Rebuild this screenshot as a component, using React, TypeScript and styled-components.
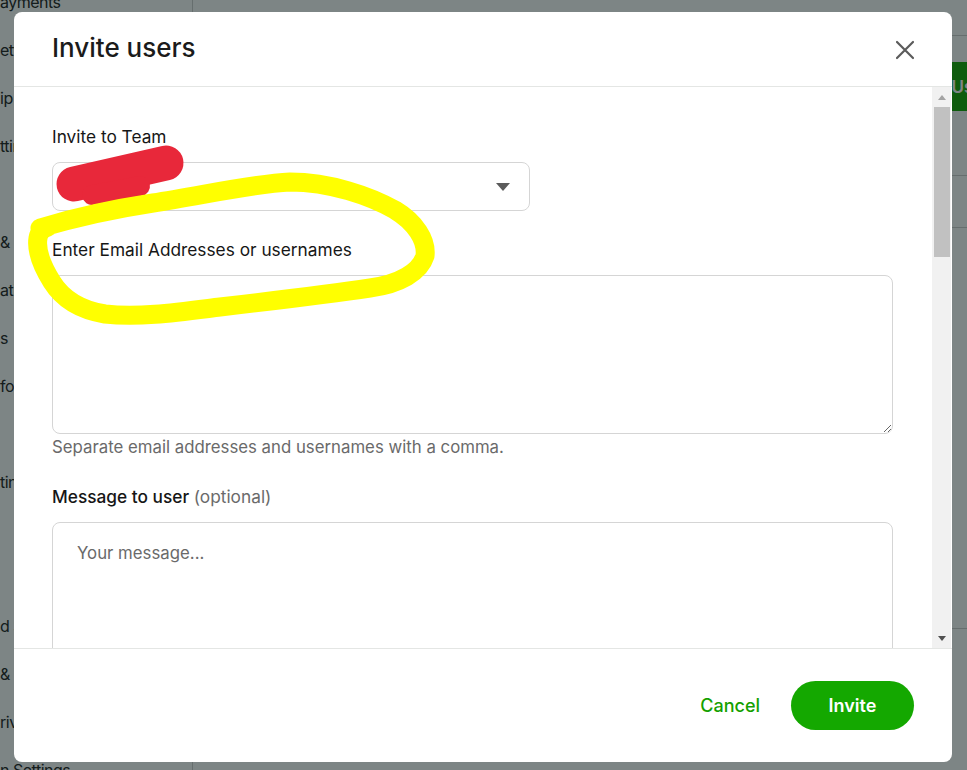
import React from "react";
import styled, { createGlobalStyle } from "styled-components";

const GlobalStyle = createGlobalStyle`
  html, body {
    margin: 0;
    padding: 0;
    height: 100%;
    overflow: hidden;
  }
  body {
    font-family: Inter, "Liberation Sans", sans-serif;
    color: #001e00;
  }
  #root {
    height: 100%;
  }
  * {
    box-sizing: border-box;
  }
`;

const Page = styled.div`
  position: relative;
  display: flex;
  height: 100vh;
  background: #fff;
  color: #222;
  overflow: hidden;
`;

const Sidebar = styled.nav`
  width: 193px;
  flex-shrink: 0;
  margin-top: -22px;
  border-right: 1px solid #cfcfcf;
  display: flex;
  flex-direction: column;
`;

const SideItem = styled.div`
  height: 48px;
  flex-shrink: 0;
  display: flex;
  align-items: center;
  font-size: 16px;
  letter-spacing: -0.5px;
  white-space: nowrap;
  overflow: hidden;
`;

const Main = styled.main`
  flex: 1;
  display: flex;
  flex-direction: column;
  min-width: 0;
`;

const TopBar = styled.div`
  height: 36px;
  flex-shrink: 0;
  border-bottom: 1px solid #cfcfcf;
`;

const ActionRow = styled.div`
  height: 101px;
  flex-shrink: 0;
  display: flex;
  align-items: center;
  padding-left: 685px;
  white-space: nowrap;
`;

const PageButton = styled.button`
  height: 49px;
  padding: 0 24px;
  border: none;
  border-radius: 8px;
  background: #14a800;
  color: #fff;
  font-family: inherit;
  font-size: 17px;
  font-weight: 600;
  flex-shrink: 0;
`;

const TableRow = styled.div<{ $h: number }>`
  height: ${(p) => p.$h}px;
  flex-shrink: 0;
  border-bottom: 1px solid #cfcfcf;
`;

const Overlay = styled.div`
  position: absolute;
  inset: 0;
  background: rgba(9, 24, 24, 0.53);
  display: flex;
  align-items: flex-start;
  padding: 12px 0 0 14px;
`;

const Modal = styled.div`
  width: 938px;
  height: 750px;
  background: #fff;
  border-radius: 8px;
  display: flex;
  flex-direction: column;
  overflow: hidden;
`;

const Header = styled.div`
  height: 75px;
  flex-shrink: 0;
  display: flex;
  align-items: center;
  justify-content: space-between;
  padding: 0 35px 4px 38px;
  border-bottom: 1px solid #e4e6e4;
`;

const Title = styled.h2`
  margin: 0;
  font-size: 26px;
  font-weight: 500;
  color: #1b1b1b;
`;

const CloseButton = styled.button`
  width: 24px;
  height: 24px;
  padding: 0;
  border: none;
  background: none;
  display: flex;
  align-items: center;
  justify-content: center;
  margin-top: 6px;
`;

const Body = styled.div`
  flex: 1;
  min-height: 0;
  display: flex;
`;

const ScrollArea = styled.div`
  flex: 1;
  overflow: hidden;
  padding: 38px 39px 0 38px;
`;

const ScrollTrack = styled.div`
  width: 19px;
  flex-shrink: 0;
  margin-right: 1px;
  background: #f1f1f1;
  display: flex;
  flex-direction: column;
`;

const ScrollArrow = styled.div<{ $down?: boolean }>`
  height: 20px;
  flex-shrink: 0;
  display: flex;
  align-items: center;
  justify-content: center;

  &::after {
    content: "";
    border-left: 4.5px solid transparent;
    border-right: 4.5px solid transparent;
    ${(p) =>
      p.$down
        ? "border-top: 5px solid #505050;"
        : "border-bottom: 5px solid #a3a3a3;"}
  }
`;

const ScrollLane = styled.div`
  flex: 1;
  padding: 0 1px 0 2px;
`;

const ScrollThumb = styled.div`
  height: 150px;
  background: #c1c1c1;
`;

const Form = styled.div`
  display: flex;
  flex-direction: column;
`;

const Label = styled.label<{ $strong?: boolean }>`
  font-size: 17.3px;
  line-height: 24px;
  font-weight: ${(p) => (p.$strong ? 500 : 400)};
  color: #161616;
  margin-bottom: 13px;
`;

const Muted = styled.span`
  font-weight: 400;
  color: #6a6a6a;
`;

const SelectBox = styled.div`
  width: 478px;
  height: 49px;
  border: 1px solid #d5d5d5;
  border-radius: 8px;
  display: flex;
  align-items: center;
  justify-content: flex-end;
  padding-right: 19px;
  margin-bottom: 27px;
`;

const TextArea = styled.textarea<{ $h: number }>`
  width: 100%;
  height: ${(p) => p.$h}px;
  border: 1px solid #d5d5d5;
  border-radius: 8px;
  padding: 18px 24px;
  font-family: inherit;
  font-size: 16.8px;
  line-height: 24px;
  color: #1b1b1b;
  resize: vertical;
  outline: none;
  display: block;
  flex-shrink: 0;

  &::placeholder {
    color: #6a6a6a;
  }
`;

const Help = styled.div`
  font-size: 16.8px;
  line-height: 24px;
  color: #6a6a6a;
  margin: 1px 0 26px;
`;

const Footer = styled.div`
  height: 114px;
  flex-shrink: 0;
  border-top: 1px solid #e4e6e4;
  display: flex;
  align-items: center;
  justify-content: flex-end;
  gap: 15px;
  padding: 0 38px 0 0;
`;

const CancelButton = styled.button`
  background: none;
  border: none;
  padding: 0 16px;
  height: 49px;
  font-family: inherit;
  font-size: 18px;
  font-weight: 500;
  color: #14a000;
`;

const InviteButton = styled.button`
  width: 123px;
  height: 49px;
  border: none;
  border-radius: 25px;
  background: #14a800;
  color: #fff;
  font-family: inherit;
  font-size: 18px;
  font-weight: 600;
`;

const Annotations = styled.svg`
  position: absolute;
  inset: 0;
  pointer-events: none;
`;

const sideItems = [
  "ayments",
  "ettings",
  "ip",
  "ttings",
  "",
  "& Identity",
  "ations",
  "s",
  "fo",
  "",
  "tings",
  "",
  "",
  "d Security",
  "& Taxes",
  "rivacy",
  "n Settings",
];

const App: React.FC = () => {
  return (
    <>
      <GlobalStyle />
      <Page>
        <Sidebar>
          {sideItems.map((t, i) => (
            <SideItem key={i}>{t}</SideItem>
          ))}
        </Sidebar>
        <Main>
          <TopBar />
          <ActionRow>
            <PageButton>Invite Users</PageButton>
          </ActionRow>
          <TableRow $h={39} />
          <TableRow $h={52} />
          <TableRow $h={401} />
        </Main>

        <Overlay>
          <Modal role="dialog" aria-label="Invite users">
            <Header>
              <Title>Invite users</Title>
              <CloseButton aria-label="Close">
                <svg width="20" height="20" viewBox="0 0 20 20">
                  <path
                    d="M2 2 L18 18 M18 2 L2 18"
                    stroke="#5b5b5b"
                    strokeWidth="2.2"
                    strokeLinecap="round"
                  />
                </svg>
              </CloseButton>
            </Header>
            <Body>
              <ScrollArea>
                <Form>
                  <Label>Invite to Team</Label>
                  <SelectBox>
                    <svg width="14" height="8" viewBox="0 0 14 8">
                      <path d="M0 0 H14 L7 8 Z" fill="#5b5b5b" />
                    </svg>
                  </SelectBox>
                  <Label>Enter Email Addresses or usernames</Label>
                  <TextArea $h={159} />
                  <Help>Separate email addresses and usernames with a comma.</Help>
                  <Label $strong>
                    Message to user <Muted>(optional)</Muted>
                  </Label>
                  <TextArea $h={160} placeholder="Your message..." />
                </Form>
              </ScrollArea>
              <ScrollTrack aria-hidden>
                <ScrollArrow />
                <ScrollLane>
                  <ScrollThumb />
                </ScrollLane>
                <ScrollArrow $down />
              </ScrollTrack>
            </Body>
            <Footer>
              <CancelButton>Cancel</CancelButton>
              <InviteButton>Invite</InviteButton>
            </Footer>
          </Modal>
        </Overlay>

        <Annotations width="967" height="770" viewBox="0 0 967 770">
          <path
            d="M74 184 L166 163"
            stroke="#e8283a"
            strokeWidth="35"
            strokeLinecap="round"
            fill="none"
          />
          <path
            d="M92 195 L140 186"
            stroke="#e8283a"
            strokeWidth="20"
            strokeLinecap="round"
            fill="none"
          />
          <path
            d="M40 228 C80 216 120 208 153 203 C200 196 250 184 290 182 C330 182 370 196 395 210 C415 222 427 240 425 256 C420 272 400 284 370 288 C330 294 280 300 220 307 C180 312 140 318 105 314 C80 310 62 298 52 282 C42 266 36 250 38 238 C39 232 42 229 48 227"
            stroke="#ffff00"
            strokeWidth="19"
            strokeLinecap="round"
            strokeLinejoin="round"
            fill="none"
          />
        </Annotations>
      </Page>
    </>
  );
};

export default App;
